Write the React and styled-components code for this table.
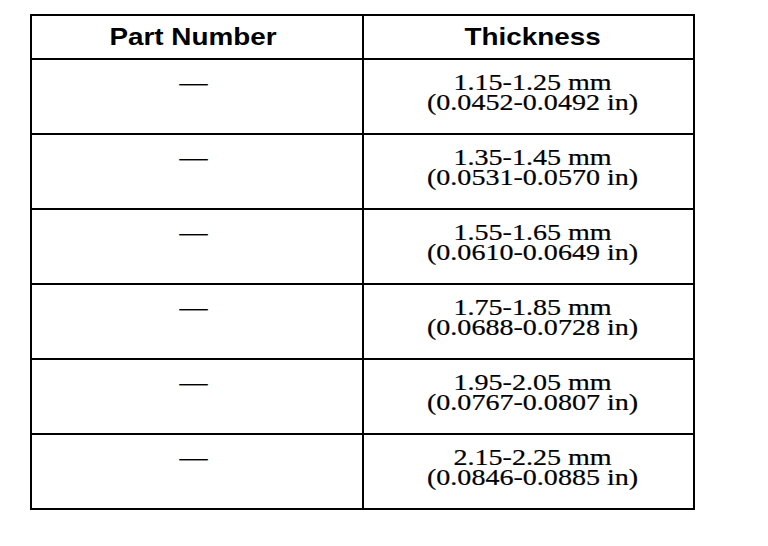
import React from "react";
import styled, { createGlobalStyle } from "styled-components";

const Global = createGlobalStyle`
  html, body { margin: 0; padding: 0; background: #fff; }
  body { font-family: "Liberation Serif", "Times New Roman", serif; color: #000; }
`;

const Page = styled.div`
  padding: 14px 0 0 30px;
`;

const Table = styled.div`
  width: 665px;
  box-sizing: border-box;
  border: 2px solid #000;
`;

const Row = styled.div`
  display: grid;
  grid-template-columns: 332px 1fr;
  height: ${(p) => (p.$head ? 42 : 73)}px;
  border-top: ${(p) => (p.$first ? "none" : "2px solid #000")};
`;

const Cell = styled.div`
  box-sizing: border-box;
  border-right: ${(p) => (p.$left ? "2px solid #000" : "none")};
  display: flex;
  flex-direction: column;
  align-items: center;
  justify-content: ${(p) => (p.$head ? "center" : "flex-start")};
  padding-top: ${(p) => (p.$head ? 0 : 13)}px;
  padding-right: ${(p) => (p.$left ? 8 : 0)}px;
  padding-left: ${(p) => (p.$left ? 0 : 8)}px;
`;

const HeadText = styled.span`
  display: inline-block;
  font-family: "Liberation Sans", Arial, sans-serif;
  font-weight: bold;
  font-size: 24px;
  line-height: 24px;
  transform: scaleX(1.16);
  white-space: nowrap;
`;

const BodyText = styled.span`
  display: inline-block;
  font-family: "Liberation Serif", "Times New Roman", serif;
  font-size: 23px;
  line-height: 20px;
  text-align: center;
  transform: scaleX(1.22);
  -webkit-text-stroke: 0.2px #000;
  white-space: pre;
`;

const rows = [
  ["1.15-1.25 mm", "(0.0452-0.0492 in)"],
  ["1.35-1.45 mm", "(0.0531-0.0570 in)"],
  ["1.55-1.65 mm", "(0.0610-0.0649 in)"],
  ["1.75-1.85 mm", "(0.0688-0.0728 in)"],
  ["1.95-2.05 mm", "(0.0767-0.0807 in)"],
  ["2.15-2.25 mm", "(0.0846-0.0885 in)"],
];

export default function App() {
  return (
    <Page>
      <Global />
      <Table>
        <Row $head $first>
          <Cell $left $head>
            <HeadText>Part Number</HeadText>
          </Cell>
          <Cell $head>
            <HeadText>Thickness</HeadText>
          </Cell>
        </Row>
        {rows.map(([mm, inch]) => (
          <Row key={mm}>
            <Cell $left>
              <BodyText>—</BodyText>
            </Cell>
            <Cell>
              <BodyText>{`${mm}\n${inch}`}</BodyText>
            </Cell>
          </Row>
        ))}
      </Table>
    </Page>
  );
}
